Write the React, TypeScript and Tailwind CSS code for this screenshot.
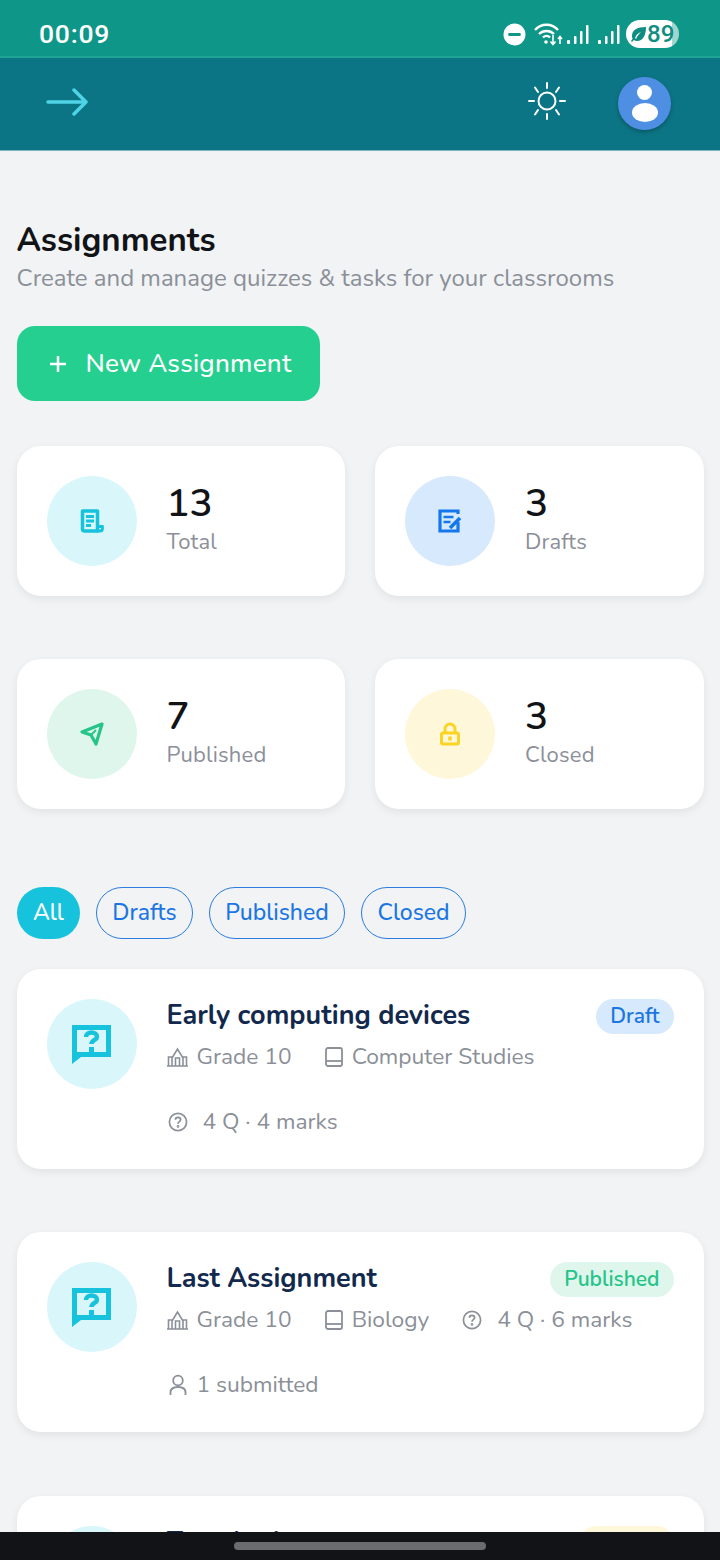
import React from "react";

const F = { fontFamily: "Nunito, Lato, 'Noto Sans', sans-serif" };

function Stat({ n, label, bg, icon }: { n: string; label: string; bg: string; icon: React.ReactNode }) {
  return (
    <div className="h-[150px] rounded-[24px] bg-white shadow-[0_3px_8px_rgba(0,0,0,0.07)] flex items-center pl-[30px] gap-[30px]">
      <div className={`w-[90px] h-[90px] rounded-full flex items-center justify-center ${bg}`}>{icon}</div>
      <div className="flex flex-col">
        <div className="text-[38.5px] leading-[42px] font-[650] text-[#111317] -mt-[2px] mb-[2px]">{n}</div>
        <div className="text-[22px] leading-[30px] tracking-[0.2px] text-[#8b8f98]">{label}</div>
      </div>
    </div>
  );
}

const QIcon = () => (
  <svg width="42" height="42" viewBox="0 0 42 42" className="text-[#17c3dc] -mt-[1px] -ml-[1px]">
    <path fillRule="evenodd" fill="currentColor" d="M2 2h39v32H11L2 41zM7 7v22h29V7z" />
    <path fill="none" stroke="currentColor" strokeWidth="4.500" d="M16 14c0-6 11-6 11 0 0 3-5.500 3-5.500 7" />
    <rect x="19" y="24" width="5" height="6" fill="currentColor" />
  </svg>
);

const School = () => (
  <svg width="21" height="20" viewBox="0 0 21 20" fill="none" stroke="#8b8f98" strokeWidth="1.600">
    <path d="M0 19h21M1.500 19v-9h3.500v9M19.500 19v-9H16v9M5 11l5.500-9L16 11v8M8.500 19v-8h4v8" />
  </svg>
);
const Book = () => (
  <svg width="18" height="20" viewBox="0 0 18 20" fill="none" stroke="#8b8f98" strokeWidth="1.800">
    <rect x="1" y="1" width="16" height="18" rx="2" />
    <path d="M1 14h16" />
  </svg>
);
const Help = () => (
  <svg width="20" height="20" viewBox="0 0 20 20" fill="none" stroke="#8b8f98" strokeWidth="1.700">
    <circle cx="10" cy="10" r="8.600" />
    <path d="M7.400 7.800c0-3.200 5.200-3.200 5.200 0 0 1.900-2.600 1.900-2.600 3.900" />
    <circle cx="10" cy="14.400" r=".5" />
  </svg>
);
const User = () => (
  <svg width="20" height="22" viewBox="0 0 20 22" fill="none" stroke="#8b8f98" strokeWidth="1.800">
    <circle cx="10" cy="6.500" r="4.800" />
    <path d="M2.500 21v-2.500c0-3.500 3-5.500 7.500-5.500s7.500 2 7.500 5.500V21" />
  </svg>
);

function Meta({ icon, text, gap = "gap-[9px]" }: { icon: React.ReactNode; text: string; gap?: string }) {
  return (
    <div className={`flex items-center ${gap} text-[22.75px] leading-[32px] text-[#8b8f98] whitespace-nowrap`}>
      {icon}
      <span>{text}</span>
    </div>
  );
}

function Assignment({
  title, badge, badgeClass, row1, row2,
}: { title: string; badge: string; badgeClass: string; row1?: React.ReactNode; row2?: React.ReactNode }) {
  return (
    <div className="rounded-[24px] bg-white shadow-[0_3px_8px_rgba(0,0,0,0.07)] h-[200px] pl-[30px] pr-[30px] pt-[30px] flex gap-[30px]">
      <div className="w-[90px] h-[90px] rounded-full bg-[#d9f6fa] flex items-center justify-center shrink-0">
        <QIcon />
      </div>
      <div className="flex-1 min-w-0">
        <div className="flex items-start justify-between">
          <div className="text-[27px] leading-[32px] font-bold text-[#12294d] whitespace-nowrap mt-[1px]">{title}</div>
          <div className={`h-[35px] px-[14px] rounded-full text-[21px] leading-[35px] font-semibold ${badgeClass}`}>{badge}</div>
        </div>
        {row1 && <div className="flex items-center gap-[33px] mt-[7px]">{row1}</div>}
        {row2 && <div className="flex items-center mt-[33px] ml-px">{row2}</div>}
      </div>
    </div>
  );
}

export default function App() {
  return (
    <div style={F} className="relative w-[720px] h-[1560px] overflow-hidden bg-[#f1f3f5]">
      {/* Status bar */}
      <div className="h-[58px] bg-[#0e9688] border-b-2 border-[#1ea595] flex items-center justify-between pl-[39px] pr-[41px]">
        <span style={{ fontFamily: "Roboto, sans-serif" }} className="text-[26.5px] font-medium text-white tracking-[0.8px] pt-[11px]">00:09</span>
        <div className="flex items-center gap-[8px] pt-[12px]">
          <svg width="23" height="23" viewBox="0 0 22 22"><circle cx="11" cy="11" r="10.500" fill="#fff" /><rect x="5" y="9.500" width="12" height="3" rx="1" fill="#0e9688" /></svg>
          <svg width="30" height="24" viewBox="0 0 30 24" fill="none" stroke="#fff" strokeWidth="2.400">
            <path d="M1 8c6-7 17-7 23 0M5 12c4-4 11-4 15 0M9 15.500c2-2 5-2 7 0" />
            <circle cx="12" cy="20" r="1.800" fill="#fff" stroke="none" />
            <path d="M19 13v9M16.500 19.500l2.500 3 2.500-3M26 22v-7M24 17l2-2.500 2 2.500" strokeWidth="1.600" />
          </svg>
          <svg width="24" height="24" viewBox="0 0 24 24" fill="#fff" className="-ml-[6px]">
            <rect x="1" y="18" width="3" height="4" rx="1" /><rect x="8" y="14" width="2.500" height="8" rx="1" /><rect x="14" y="9" width="2.500" height="13" rx="1" /><rect x="20" y="3" width="2.500" height="19" rx="1" />
          </svg>
          <svg width="24" height="24" viewBox="0 0 24 24" fill="#fff" className="-ml-[1px]">
            <rect x="1" y="18" width="3" height="4" rx="1" /><rect x="8" y="14" width="2.500" height="8" rx="1" /><rect x="14" y="9" width="2.500" height="13" rx="1" /><rect x="20" y="3" width="2.500" height="19" rx="1" />
          </svg>
          <div style={{ fontFamily: "Roboto, sans-serif" }} className="-ml-[3px] w-[53px] h-[28px] rounded-full bg-[linear-gradient(90deg,#ffffff_86%,#9fd6cd_86%)] flex items-center pl-[4px] text-[#0e8d80] text-[24px] font-medium leading-none">
            <svg width="17" height="17" viewBox="0 0 17 17" fill="currentColor" className="shrink-0"><path d="M16 1C7 1 2 4 2 10c0 1 .2 2 .6 2.800L1 15l1 1 1.800-2c1 .7 2 1 3.200 1 6 0 9-6 9-14zM5 12c1-3 3-5 6-6-2 2-4 4-5 7z" /></svg>
            <span>89</span>
          </div>
        </div>
      </div>

      {/* Header */}
      <div className="h-[93px] bg-[#0c7585] border-b border-[#7fb4c2] flex items-center justify-between pl-[46px] pr-[49px]">
        <svg width="42" height="30" viewBox="0 0 42 30" fill="none" stroke="#4fd3e6" strokeWidth="3.500" strokeLinecap="round" strokeLinejoin="round" className="-mt-[5px]">
          <path d="M2 15h38M28 3l12 12-12 12" />
        </svg>
        <div className="flex items-center gap-[52px]">
          <svg width="38" height="38" viewBox="0 0 38 38" fill="none" stroke="#fff" strokeWidth="2" strokeLinecap="round" className="-mt-[6px] -ml-[1px]">
            <circle cx="19" cy="19" r="8.500" />
            <path d="M19 1v5M19 32v5M1 19h5M32 19h5M7 5.500l3 4.500M28 28l3 4.500M31 5.500l-3 4.500M10 28l-3 4.500" />
          </svg>
          <div className="w-[53px] h-[53px] rounded-full bg-[#4f8fe3] shadow-[0_2px_4px_rgba(0,0,0,0.25)] flex flex-col items-center justify-center -mt-[2px]">
            <div className="w-[15px] h-[15px] rounded-full bg-white" />
            <div className="w-[26px] h-[19px] rounded-[50%] bg-white mt-[3px]" />
          </div>
        </div>
      </div>

      {/* Content */}
      <div className="px-[16.5px]">
        <h1 className="mt-[71px] text-[33px] leading-[38px] font-bold text-[#111317]">Assignments</h1>
        <p className="mt-[2px] text-[24px] leading-[32px] text-[#8b8f98]">Create and manage quizzes &amp; tasks for your classrooms</p>

        <button className="mt-[32px] h-[75px] w-[303.5px] rounded-[18px] bg-[#25cf8f] flex items-center pl-[33px] gap-[20px] text-white text-[26px] tracking-[0.25px] font-medium">
          <svg width="16" height="16" viewBox="0 0 16 16" stroke="#fff" strokeWidth="2.500"><path d="M8 0v16M0 8h16" /></svg>
          <span>New Assignment</span>
        </button>

        <div className="grid grid-cols-2 gap-x-[30px] gap-y-[63px] mt-[45px]">
          <Stat n="13" label="Total" bg="bg-[#d9f6fa]" icon={
            <svg width="24" height="24" viewBox="0 0 24 24" className="text-[#17c3dc]" fill="none" stroke="currentColor">
              <path strokeWidth="3.500" strokeLinejoin="round" d="M2.500 2h15v20H4.500a2 2 0 0 1-2-2z" />
              <path strokeWidth="2.800" d="M6 7.500h8M6 12h8M6 16.500h5" />
              <path strokeWidth="2.800" strokeLinejoin="round" d="M18 17.500h4.500v2a2.500 2.500 0 0 1-2.500 2.500h-3" />
            </svg>
          } />
          <Stat n="3" label="Drafts" bg="bg-[#d7e9fd]" icon={
            <svg width="24" height="24" viewBox="0 0 24 24" fill="none" stroke="#1478ec">
              <path strokeWidth="3.200" d="M20 13v9H2V2h18v3" />
              <path d="M5.500 8h10M5.500 13h7" strokeWidth="2.500" />
              <path d="M12 19l10-10" strokeWidth="3.500" />
            </svg>
          } />
          <Stat n="7" label="Published" bg="bg-[#dff6ec]" icon={
            <svg width="24" height="24" viewBox="0 0 24 24" fill="none" stroke="#25c489" strokeWidth="3.200" strokeLinejoin="round">
              <path d="M22 2L2 10l9 3 5 9z" /><path d="M11 13l5-5" strokeWidth="2" />
            </svg>
          } />
          <Stat n="3" label="Closed" bg="bg-[#fef7da]" icon={
            <svg width="24" height="24" viewBox="0 0 24 24" fill="none" stroke="#fbd421">
              <rect x="3.500" y="11" width="17" height="11" rx="1.500" strokeWidth="3" />
              <path d="M7 11V7a5 5 0 0 1 10 0v4" strokeWidth="3" />
              <path d="M12 14.500v4" strokeWidth="3.500" />
            </svg>
          } />
        </div>

        <div className="flex items-center gap-[16px] mt-[78px] text-[23px] font-medium">
          <div className="h-[52px] w-[63.5px] rounded-full bg-[#17c3dc] text-white flex items-center justify-center">All</div>
          <div className="h-[52px] w-[97px] rounded-full border-[1.5px] border-[#2b7de0] text-[#1b76e4] flex items-center justify-center">Drafts</div>
          <div className="h-[52px] w-[136px] rounded-full border-[1.5px] border-[#2b7de0] text-[#1b76e4] flex items-center justify-center">Published</div>
          <div className="h-[52px] w-[105px] rounded-full border-[1.5px] border-[#2b7de0] text-[#1b76e4] flex items-center justify-center">Closed</div>
        </div>

        <div className="flex flex-col gap-[63px] mt-[30px]">
          <Assignment
            title="Early computing devices"
            badge="Draft"
            badgeClass="bg-[#d7e9fd] text-[#1b76e4]"
            row1={<><Meta icon={<School />} text="Grade 10" /><Meta icon={<Book />} text="Computer Studies" /></>}
            row2={<Meta icon={<Help />} text="4 Q · 4 marks" gap="gap-[15px]" />}
          />
          <Assignment
            title="Last Assignment"
            badge="Published"
            badgeClass="bg-[#dff6ec] text-[#25c489]"
            row1={<><Meta icon={<School />} text="Grade 10" /><Meta icon={<Book />} text="Biology" /><Meta icon={<Help />} text="4 Q · 6 marks" gap="gap-[15px]" /></>}
            row2={<Meta icon={<User />} text="1 submitted" />}
          />
          <div className="mt-px">
            <Assignment
              title="Test Assignment"
              badge="Closed"
              badgeClass="bg-[#fef7da] text-[#fbd421]"
            />
          </div>
        </div>
      </div>

      {/* Navigation bar */}
      <div className="absolute left-0 right-0 bottom-0 h-[28px] bg-[#111317] flex justify-center pt-[10px]">
        <div className="w-[252px] h-[8px] rounded-full bg-[#6b6c70]" />
      </div>
    </div>
  );
}
